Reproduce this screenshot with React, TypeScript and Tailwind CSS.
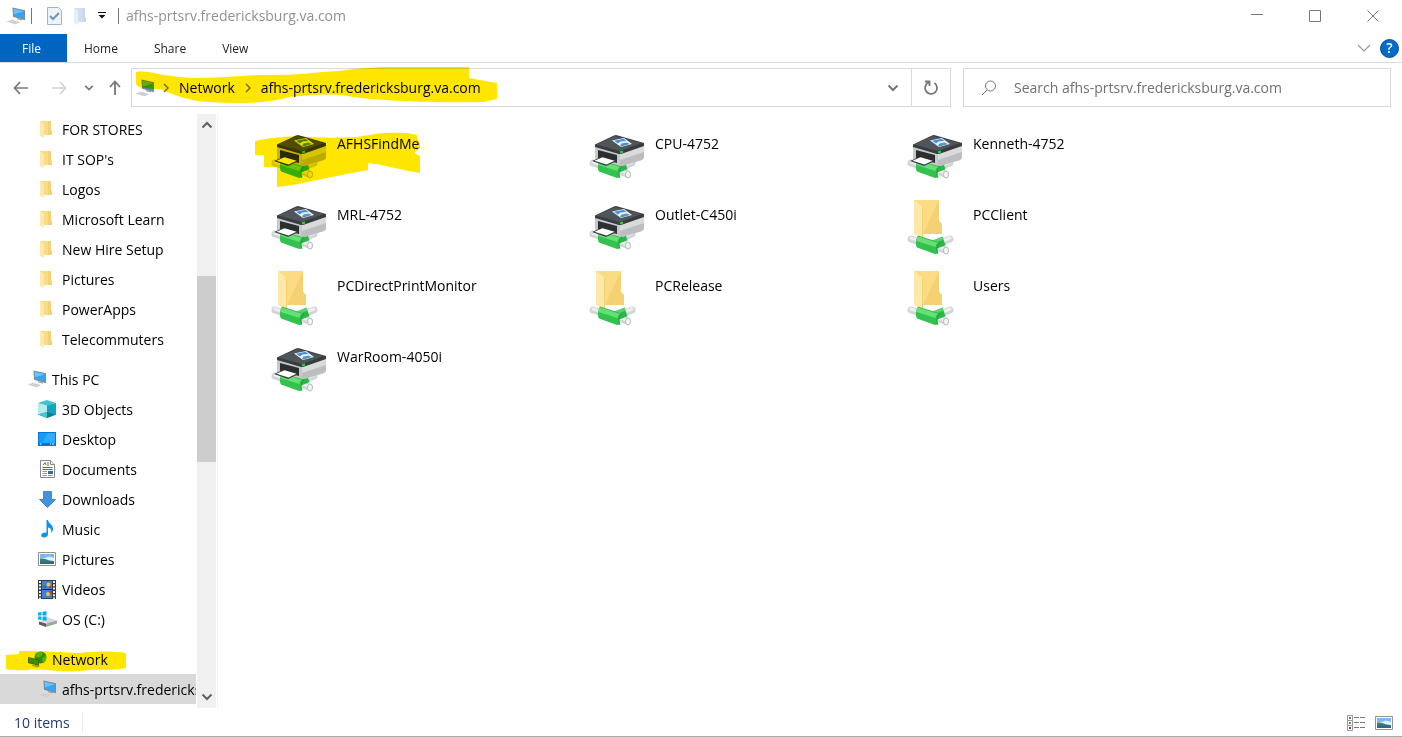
import React from 'react';

const Computer = ({ className = '' }: { className?: string }) => (
  <svg width="20" height="18" viewBox="0 0 20 18" className={`shrink-0 ${className}`}>
    <path d="M6.500 .5L19 3.300v10L7 9.800z" fill="#7d8993" />
    <path d="M7.500 1.700l10.700 2.500v7.500L8 8.900z" fill="#37a3f2" />
    <path d="M7.500 1.700l10.700 2.500L8 7.200z" fill="#6cc2fb" />
    <path d="M11 11l5 1.300v1.300l-5-1.300z" fill="#9aa3aa" />
    <path d="M0 14.500l6-2 8.500 2.700L9.500 17.500z" fill="#dcdfe1" />
    <path d="M2.500 14.500l8 2M5 13.500l8 2" stroke="#b3b9be" strokeWidth=".6" />
  </svg>
);

const SmallFolder = ({ pale = false }: { pale?: boolean }) => (
  <svg width="14" height="18" viewBox="0 0 14 18" className="shrink-0">
    <path d="M0 1h11v9l1 1.500V15H0z" fill={pale ? '#d3dff0' : '#f9dc86'} />
    <path d="M8 1h3v9l1 1.500V15H8z" fill={pale ? '#c8d7ec' : '#f4d176'} />
    <path d="M0 1l4 2.700V18l-4-2z" fill={pale ? '#e6eef8' : '#ffe9ab'} />
  </svg>
);

const Cube = () => (
  <svg width="18" height="18" viewBox="0 0 18 18">
    <path d="M0 3l9 2v13l-9-3.500z" fill="#b5ecee" />
    <path d="M18 3L9 5v13l9-3.500z" fill="#12a5bd" />
    <path d="M0 3l9-3 9 3-9 2.500z" fill="#40c4cf" />
    <path d="M0 14.500l9-2.500 9 2.500L9 18z" fill="#078397" />
    <path d="M0 14.500l9-2.500v6z" fill="#46c5ce" />
  </svg>
);

const DesktopIcon = () => (
  <svg width="18" height="14" viewBox="0 0 18 14">
    <path d="M0 0h18v14H0z" fill="#0b75cf" />
    <path d="M1 1h16v10H1z" fill="#129bfb" />
    <path d="M10 1h7v10H4z" fill="#34aafe" />
    <path d="M2 12h1.500M12 12h1M14 12h2" stroke="#fff" />
  </svg>
);

const DocumentIcon = () => (
  <svg width="15" height="18" viewBox="0 0 15 18">
    <path d="M.5.5h10l4 4v13H.500z" fill="#fff" stroke="#8a8a8a" />
    <path d="M10.500.5v4h4" fill="#eee" stroke="#8a8a8a" />
    <path d="M3 5l2-2.500L6 5M7 3h2M7 5h2M2.500 7.500h10M2.500 9.500h10" stroke="#1979ca" fill="none" />
    <path d="M2.500 11.500H7M2.500 13.500H7M2.500 15.500H7M8 15.500h4.500" stroke="#999" />
    <path d="M8 11h5v3H8z" fill="#36699d" />
  </svg>
);

const DownloadIcon = () => (
  <svg width="17" height="17" viewBox="0 0 17 17">
    <path d="M4.500.5h8v8h4l-8 8-8-8h4z" fill="#3e94e0" stroke="#246fb5" strokeWidth=".7" />
  </svg>
);

const MusicIcon = () => (
  <svg width="13" height="18" viewBox="0 0 13 18">
    <path d="M5.500 0H7c.3 3.500 5 4.600 5 8.500 0 2-.8 3.500-1.800 4.500.7-3.500-.8-5-3.200-5.500V14c0 2-1.700 3.500-4 3.500-1.800 0-2.800-.9-2.800-2.200 0-1.700 1.800-3 5.300-2.800z" fill="#0a94ef" />
  </svg>
);

const PictureIcon = () => (
  <svg width="18" height="14" viewBox="0 0 18 14">
    <path d="M.5.500h17v13H.5z" fill="#fff" stroke="#929292" />
    <path d="M2 2h14v10H2z" fill="#78baf5" />
    <path d="M2 6h5l4-1.500 5 1.500v3H2z" fill="#e1f2fd" />
    <path d="M2 6.500c4-.5 7 1.500 14 2.700V10H2z" fill="#417c69" />
    <path d="M2 10c5-1 9 0 14-.5V12H2z" fill="#2d688d" />
  </svg>
);

const VideoIcon = () => (
  <svg width="18" height="19" viewBox="0 0 18 19">
    <path d="M0 0h18v19H0z" fill="#3b3b3b" />
    <path d="M4 1h10v8H4zM4 10h10v8H4z" fill="#3f80d8" />
    <path d="M2 1v18M16 1v18" stroke="#eee" strokeWidth="2" strokeDasharray="2 1.300" />
    <circle cx="10.500" cy="4.500" r="2" fill="#efc734" />
    <circle cx="10" cy="14" r="2" fill="#efc734" />
    <path d="M5 5.500h3V8H5zM11 6h2v2h-2zM11.500 11H14v2.500h-2.500z" fill="#c23a35" />
    <path d="M5 9h9v1H5z" fill="#232323" />
  </svg>
);

const DriveIcon = () => (
  <svg width="19" height="16" viewBox="0 0 19 16">
    <path d="M2 10.500L9 6l10 3.500-8 3z" fill="#d8d8d8" />
    <path d="M1 10.500l7 2v3.500l-7-2.500z" fill="#5d5d5d" />
    <path d="M8 12.500l11-3v3L8 16z" fill="#a4a4a4" />
    <path d="M9 14.300h2" stroke="#5ce85c" />
    <path d="M0 1.500L3.500 1v3.500H0zM4.500.8L8.500.2v4.300h-4zM0 5.500h3.500V9L0 8.500zM4.500 5.500h4v4.200l-4-.5z" fill="#00adef" />
  </svg>
);

const NetworkIcon = () => (
  <svg width="19" height="17" viewBox="0 0 19 17">
    <circle cx="12.500" cy="6.500" r="6" fill="#2c9fd6" />
    <path d="M9 1.500c3-1 5 0 6 1l-2 3-4 1-1-2zM14 7l4-2v4l-3 3z" fill="#62c466" />
    <path d="M0 6l11 2.500V15L0 12z" fill="#506472" />
    <path d="M1 7l9 2.300v4.400L1 11.300z" fill="#2fa8db" />
    <path d="M3 14.500l3-1 6 1.500-3 1.500z" fill="#aeb6b8" />
  </svg>
);

// White network cable with the green T joint
const Pipe = ({ branch = false }: { branch?: boolean }) => (
  <g fill="none">
    <g strokeLinecap="round">
      <path d="M5 35l9 3M30 43l9 3M36 38l8-3" stroke="#d2d5d7" strokeWidth="7" />
      <path d="M5 34l9 3M30 42l9 3M36 37l8-3" stroke="#eceeef" strokeWidth="3" />
    </g>
    <ellipse cx="40" cy="46.500" rx="2.500" ry="3.500" fill="#f5f5f5" stroke="#b4b8ba" />
    {branch && (
      <>
        <path d="M25 42l13-5" stroke="#2fb64a" strokeWidth="9" />
        <path d="M25 39l12-5" stroke="#58d568" strokeWidth="3" />
      </>
    )}
    <path d="M12 31.500l22 7c-3 2-4 7-2 11l-3 .5-18-6.500c-2-3-1-9 1-12z" fill="#34c24e" />
    <path d="M12 32.500l20 6.500c-2 1-2.500 2.500-2.500 4L10.500 37c0-2 .5-3.500 1.500-4.500z" fill="#68df76" />
    <path d="M34 38.500c-3 2-4 7-2 11" stroke="#179a3a" />
  </g>
);

const PrinterIcon = () => (
  <svg width="58" height="53" viewBox="0 0 58 53">
    <Pipe branch />
    {/* body */}
    <path d="M7 18l25 7 1 13-4-1L7 31z" fill="#c6c8ca" />
    <path d="M32 25l24-8v13l-2 2-20 6h-2z" fill="#d9dadc" />
    <path d="M32 32l24-8v6l-2 2-20 6h-2z" fill="#bcbec0" />
    <path d="M7 16.500L26 7.500l2-.5 28 8v3l-23 8h-2L7 19z" fill="#383c40" />
    <path d="M8 16.500L27 8l27 7-22 8z" fill="#50555a" />
    {/* screen */}
    <path d="M24 12.500l12-2.500 8 6-11 3z" fill="#ecf6fd" />
    <path d="M26 12.800l9.500-2 3 2.200-6 .5-2.500 2z" fill="#4a90e0" />
    <path d="M32 17.500l1.500-2 5-1 3.500 1.500-8.500 2.500z" fill="#5a94b4" />
    {/* tray */}
    <path d="M10 22l19 5v8L10 30z" fill="#2b2f32" />
    <path d="M4 33l9-4 16 4-11 5z" fill="#3b3f43" />
    <path d="M6.500 32.800l8-3.500 12 3.500-8 3.800z" fill="#fff" />
    <path d="M32 24.500l3-1" stroke="#26d640" strokeWidth="2" />
  </svg>
);

const SharedFolderIcon = () => (
  <svg width="58" height="58" viewBox="0 0 58 58">
    <path d="M8 1h25v21l3 3v10H8z" fill="#fbdb83" />
    <path d="M33 1v21l3 3v10H17z" fill="#f6d174" />
    <path d="M8 1l9 7v31l-9-4z" fill="#ffe8a8" />
    <path d="M16 8h1v31l-1-.5z" fill="#f3cf75" />
    <g transform="translate(0 5)"><Pipe branch /></g>
  </svg>
);

const ChevronIcon = ({ className = '' }: { className?: string }) => (
  <svg width="12" height="8" viewBox="0 0 12 8" fill="none" className={className}>
    <path d="M1.500 1.500L6 6l4.500-4.500" stroke="currentColor" strokeWidth="2" />
  </svg>
);

const CrumbArrow = () => (
  <svg width="6" height="10" viewBox="0 0 6 10" fill="none" className="text-[#777]">
    <path d="M1 1l4 4-4 4" stroke="currentColor" strokeWidth="1.500" />
  </svg>
);

const FOLDERS = ['FOR STORES', "IT SOP's", 'Logos', 'Microsoft Learn', 'New Hire Setup', 'Pictures', 'PowerApps', 'Telecommuters'];

const PC_ITEMS = [
  { name: '3D Objects', icon: <Cube /> },
  { name: 'Desktop', icon: <DesktopIcon /> },
  { name: 'Documents', icon: <DocumentIcon /> },
  { name: 'Downloads', icon: <DownloadIcon /> },
  { name: 'Music', icon: <MusicIcon /> },
  { name: 'Pictures', icon: <PictureIcon /> },
  { name: 'Videos', icon: <VideoIcon /> },
  { name: 'OS (C:)', icon: <DriveIcon /> },
];

const SHARES = [
  { name: 'AFHSFindMe', type: 'printer', marked: true },
  { name: 'CPU-4752', type: 'printer' },
  { name: 'Kenneth-4752', type: 'printer' },
  { name: 'MRL-4752', type: 'printer' },
  { name: 'Outlet-C450i', type: 'printer' },
  { name: 'PCClient', type: 'folder' },
  { name: 'PCDirectPrintMonitor', type: 'folder' },
  { name: 'PCRelease', type: 'folder' },
  { name: 'Users', type: 'folder' },
  { name: 'WarRoom-4050i', type: 'printer' },
];

interface TreeItemProps {
  name: string;
  icon: React.ReactNode;
  nested?: boolean;
  selected?: boolean;
}

const TreeItem: React.FC<TreeItemProps> = ({ name, icon, nested = true, selected = false }) => (
  <a
    href="#"
    className={`flex h-[30px] items-center overflow-hidden whitespace-nowrap ${nested ? 'pl-9' : 'pl-[26px]'} ${selected ? 'bg-[#d9d9d9]' : ''}`}
  >
    <span className="flex w-[22px] shrink-0 justify-center">{icon}</span>
    <span className="ml-1 pt-0.5">{name}</span>
  </a>
);

const App: React.FC = () => {
  return (
    <div className="flex min-h-screen flex-col bg-white font-['Open_Sans','Noto_Sans',sans-serif] text-[14px] leading-5 text-black">
      {/* Title bar */}
      <header className="flex h-[34px] items-center pb-[3px] pl-1.5">
        <Computer />
        <span className="ml-[5px] h-4 w-px bg-[#777]" />
        <button aria-label="Properties" className="ml-[15px]">
          <svg width="15" height="18" viewBox="0 0 15 18">
            <path d="M.5.500h11l3 3v14H.5z" fill="#edf3fb" stroke="#a1b4cf" />
            <path d="M3 9l3 3 6-6" fill="none" stroke="#7591bb" strokeWidth="2" />
          </svg>
        </button>
        <button aria-label="New folder" className="ml-3"><SmallFolder pale /></button>
        <button aria-label="Customize toolbar" className="ml-2.5">
          <svg width="8" height="7" viewBox="0 0 8 7"><path d="M0 .5h8" stroke="#111" /><path d="M.5 3h7L4 6.500z" fill="#111" /></svg>
        </button>
        <span className="ml-3 h-4 w-px bg-[#777]" />
        <h1 className="ml-[7px] flex-1 text-[#919191]">afhs-prtsrv.fredericksburg.va.com</h1>
        <div className="flex gap-[46px] pr-[23px] text-[#777]">
          <button aria-label="Minimize"><svg width="12" height="13" viewBox="0 0 12 13"><path d="M0 5.500h12" stroke="currentColor" /></svg></button>
          <button aria-label="Maximize"><svg width="12" height="12" viewBox="0 0 12 12"><path d="M.5.500h11v11H.5z" fill="none" stroke="currentColor" /></svg></button>
          <button aria-label="Close"><svg width="12" height="12" viewBox="0 0 12 12"><path d="M.5.500l11 11m0-11l-11 11" stroke="currentColor" /></svg></button>
        </div>
      </header>

      {/* Ribbon tabs */}
      <nav className="flex h-[29px] items-center border-b border-[#dadada] text-[12px] text-[#222]">
        <button className="h-full w-[67px] bg-[#0064c1] pt-px pr-1 text-white">File</button>
        <button className="ml-[17px] pt-px">Home</button>
        <button className="ml-9 pt-px">Share</button>
        <button className="ml-9 pt-px">View</button>
        <button aria-label="Expand ribbon" className="ml-auto text-[#999]">
          <svg width="14" height="9" viewBox="0 0 14 9"><path d="M1 1l6 6 6-6" fill="none" stroke="currentColor" strokeWidth="1.200" /></svg>
        </button>
        <button aria-label="Help" className="mr-[3px] ml-[9px] size-[19px] rounded-full border border-[#074d8e] bg-[#006dca] text-[14px] leading-4 font-semibold text-white">?</button>
      </nav>

      {/* Address and search */}
      <div className="flex h-[49px] items-center pr-[11px] text-[#777]">
        <div className="flex w-[131px] shrink-0 items-center pl-[13px]">
          <button aria-label="Back"><svg width="16" height="14" viewBox="0 0 16 14"><path d="M15 7H1.500M7 1L1.500 7 7 13" fill="none" stroke="currentColor" strokeWidth="1.700" /></svg></button>
          <button aria-label="Forward" className="ml-[22px] text-[#d0d0d0]"><svg width="16" height="14" viewBox="0 0 16 14"><path d="M1 7h13.500M9 1l5.500 6L9 13" fill="none" stroke="currentColor" strokeWidth="1.500" /></svg></button>
          <button aria-label="Recent locations" className="ml-[17px]"><ChevronIcon className="w-2.5" /></button>
          <button aria-label="Up" className="ml-[15px]"><svg width="12" height="16" viewBox="0 0 12 16"><path d="M6 15V1.500M1 7l5-5.500L11 7" fill="none" stroke="currentColor" strokeWidth="1.800" /></svg></button>
        </div>
        <div className="relative flex h-[39px] flex-1 border border-[#d9d9d9] text-black">
          <div className="flex flex-1 items-center pl-[3px]">
            <Computer />
            <span className="ml-2"><CrumbArrow /></span>
            <a href="#" className="ml-2.5">Network</a>
            <span className="ml-2.5"><CrumbArrow /></span>
            <a href="#" className="ml-2.5">afhs-prtsrv.fredericksburg.va.com</a>
          </div>
          <button aria-label="Previous locations" className="mr-3 text-[#777]"><ChevronIcon /></button>
          <button aria-label="Refresh" className="flex w-[39px] items-center justify-center border-l border-[#d9d9d9] text-[#777]">
            <svg width="16" height="16" viewBox="0 0 16 16"><path d="M11.500 3a6 6 0 1 1-6-.5M2 1.500h4.500V6" fill="none" stroke="currentColor" strokeWidth="1.800" /></svg>
          </button>
          <svg width="364" height="37" viewBox="0 0 364 37" className="pointer-events-none absolute -top-0.5 left-1 mix-blend-multiply">
            <path d="M0 5c12-2 22 3 36 4 30 5 60-1 100-1 30 0 45-3 67-4 25-4 60-5 130-6v13l28 5v16l-14 3c-50 1-100-1-130-5-25-5-45-1-64 0-16 6-50 7-80 5-20-1-35-7-49-13C8 22 1 20 0 17z" fill="#ffe600" />
          </svg>
        </div>
        <div className="ml-3 flex h-[39px] w-[428px] items-center border border-[#d9d9d9] pl-[17px]">
          <svg width="16" height="16" viewBox="0 0 16 16"><circle cx="9.500" cy="6" r="5" fill="none" stroke="currentColor" /><path d="M6 10l-5 5" stroke="currentColor" /></svg>
          <input aria-label="Search" placeholder="Search afhs-prtsrv.fredericksburg.va.com" className="ml-[17px] min-w-0 flex-1 outline-none placeholder:text-[#707070]" />
        </div>
      </div>

      {/* Navigation tree and files */}
      <div className="flex flex-1 pt-0.5">
        <aside className="flex w-[218px] shrink-0 border-r border-[#f3f3f3]">
          <nav className="mr-px w-[196px]">
            {FOLDERS.map((name) => <TreeItem key={name} name={name} icon={<SmallFolder />} />)}
            <div className="pt-2.5">
              <TreeItem name="This PC" icon={<Computer />} nested={false} />
              {PC_ITEMS.map((item) => <TreeItem key={item.name} {...item} />)}
            </div>
            <div className="relative pt-2.5">
              <TreeItem name="Network" icon={<NetworkIcon />} nested={false} />
              <svg width="120" height="22" viewBox="0 0 120 22" className="pointer-events-none absolute top-4 left-1.5 mix-blend-multiply">
                <path d="M0 5l13-1V1c26 0 40 1 60 2 20-2 32-2 47 0v15c-14 3-25 1-37 2-20 3-29 1-42 0-16-2-28 2-41-1z" fill="#ffe600" />
              </svg>
              <TreeItem name="afhs-prtsrv.fredericksburg.va.com" icon={<Computer />} selected />
            </div>
          </nav>
          <div className="flex w-[19px] flex-col items-center bg-[#f0f0f0] py-[7px] text-[#606060]">
            <ChevronIcon className="rotate-180" />
            <div className="mt-[147px] h-[186px] w-full bg-[#cdcdcd]" />
            <ChevronIcon className="mt-auto" />
          </div>
        </aside>
        <main className="flex-1 pt-[14px] pl-[52px]">
          <div className="grid grid-cols-[repeat(auto-fill,318px)]">
            {SHARES.map((item) => (
              <a key={item.name} href="#" className="relative flex h-[71px] items-start">
                <span className="w-[67px]">{item.type === 'printer' ? <PrinterIcon /> : <SharedFolderIcon />}</span>
                <span className="pt-1.5">{item.name}</span>
                {item.marked && (
                  <svg width="166" height="56" viewBox="0 0 166 56" className="pointer-events-none absolute top-1 -left-[15px] mix-blend-multiply">
                    <path d="M0 9c15-3 25-4 42-5 20 2 40 2 60 1 20-4 30-5 50-4l10 2 1 5 2 3v5l-6 5 6 3v17c-20-3-33-8-52-10v7c-28 5-50 10-75 15l-16 2V35H9V23H0z" fill="#ffe600" />
                  </svg>
                )}
              </a>
            ))}
          </div>
        </main>
      </div>

      {/* Status bar */}
      <footer className="flex h-[29px] items-center border-b border-[#aaa] pt-0.5 pr-[9px] pl-[14px] text-[#253d65]">
        <span className="border-r border-[#eee] pr-3">10 items</span>
        <button aria-label="Details view" className="ml-auto">
          <svg width="18" height="16" viewBox="0 0 18 16"><path d="M.5.500h5v5h-5zM.5 5.500h5v5h-5zM.5 10.500h5v5h-5z" fill="#fff" stroke="#999" /><path d="M2 3h2" stroke="#397db2" strokeWidth="2" /><path d="M2 8h2" stroke="#55913c" strokeWidth="2" /><path d="M2 13h2" stroke="#b92e2c" strokeWidth="2" /><path d="M7 2.500h5m1 0h5M7 7.500h5m1 0h5M7 12.500h5m1 0h5" stroke="#777" /></svg>
        </button>
        <button aria-label="Large icons view" className="ml-2.5"><PictureIcon /></button>
      </footer>
    </div>
  );
};

export default App;
